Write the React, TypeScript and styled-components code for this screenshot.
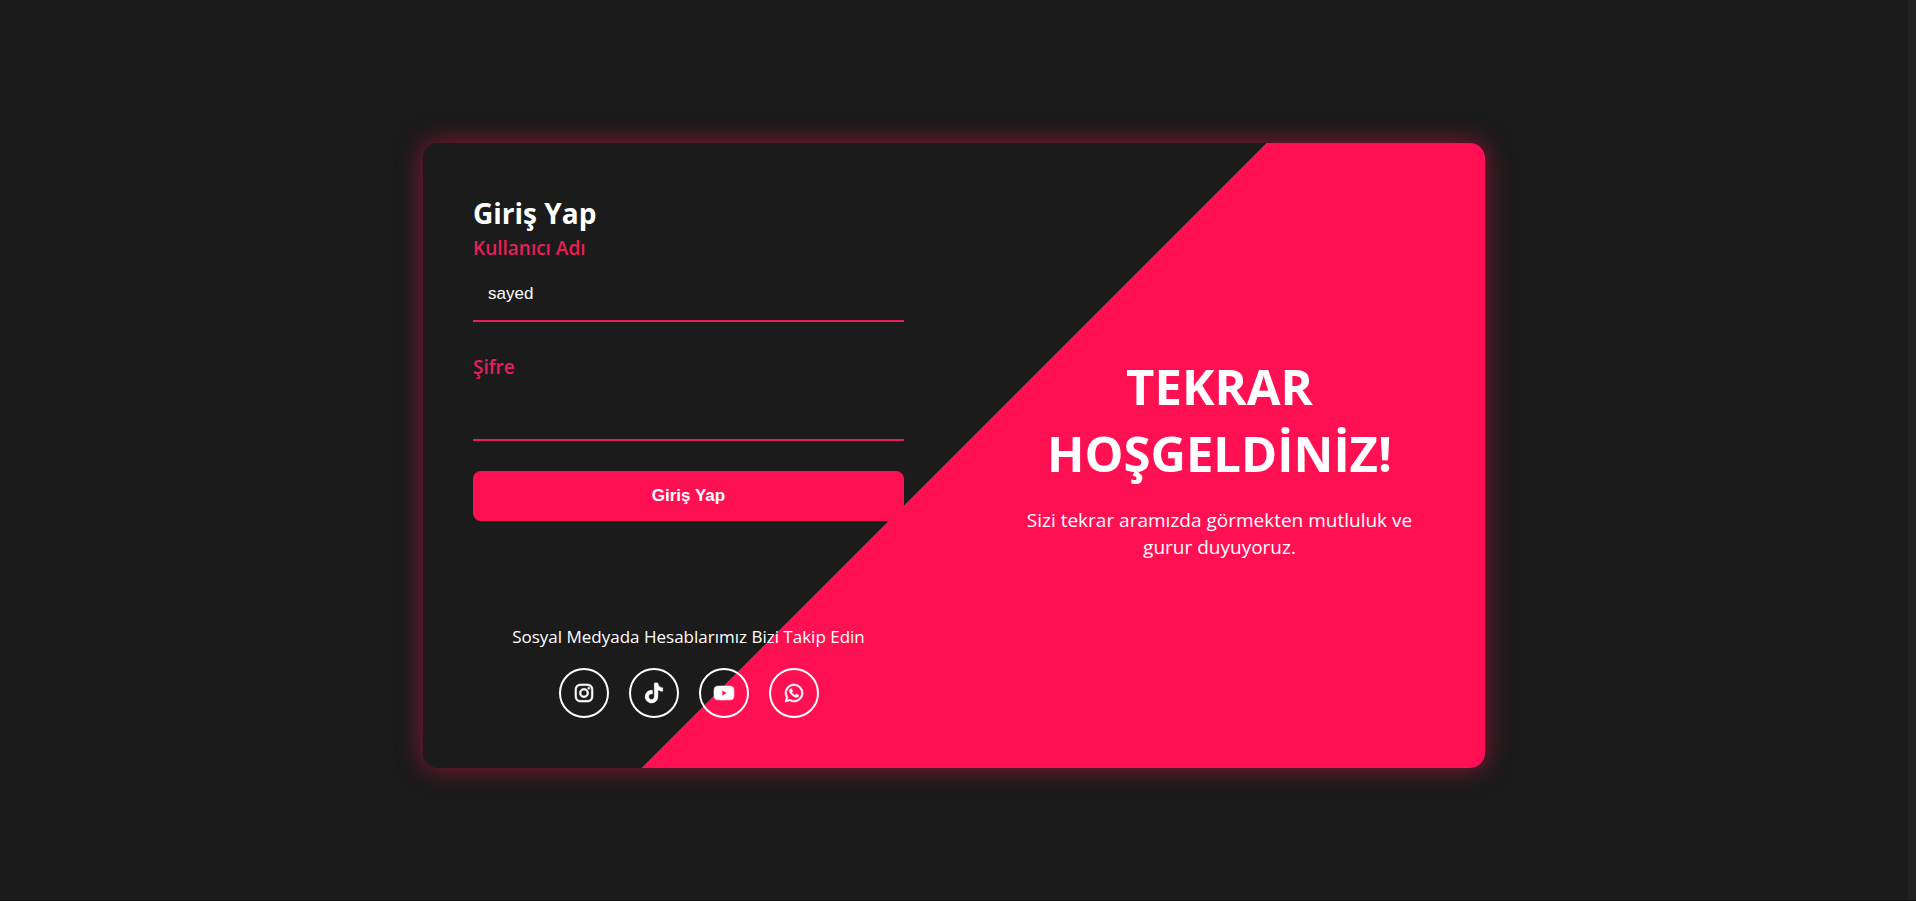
import React from "react";
import styled, { createGlobalStyle } from "styled-components";
import {
  BiLogoInstagram,
  BiLogoTiktok,
  BiLogoYoutube,
  BiLogoWhatsapp,
} from "react-icons/bi";

const dark = "#1b1b1b";
const accent = "#ff1053";
const labelPink = "#e91e58";

const GlobalStyle = createGlobalStyle`
  *, *::before, *::after { box-sizing: border-box; margin: 0; padding: 0; }
  body {
    background: ${dark};
    color: #fff;
    font-family: "Segoe UI", "Open Sans", "Noto Sans", sans-serif;
  }
`;

const Page = styled.div`
  display: flex;
  min-height: 100vh;
  border-bottom: 1px solid #101010;
`;

const Main = styled.main`
  flex: 1;
  display: flex;
  align-items: center;
  justify-content: center;
  padding: 10px 20px 0;
`;

const Gutter = styled.div`
  width: 8px;
  background: #222;
`;

const Card = styled.section`
  display: grid;
  grid-template-columns: 1fr 1fr;
  width: 100%;
  max-width: 1062px;
  min-height: 625px;
  border-radius: 15px;
  background: linear-gradient(135deg, ${dark} 50%, ${accent} 50%);
  box-shadow: 0 0 25px rgba(255, 16, 83, 0.5);
`;

const LoginSide = styled.div`
  display: flex;
  flex-direction: column;
  justify-content: space-between;
  padding: 50px;
`;

const Form = styled.form`
  display: flex;
  flex-direction: column;
`;

const Title = styled.h2`
  font-size: 28px;
  line-height: 40px;
  font-weight: 700;
`;

const Field = styled.div`
  display: flex;
  flex-direction: column;
  gap: 4px;
  margin-bottom: 30px;
`;

const Label = styled.label`
  font-size: 19px;
  line-height: 31px;
  font-weight: 600;
  color: ${labelPink};
`;

const Input = styled.input`
  width: 100%;
  height: 54px;
  padding: 0 15px;
  border: 0;
  border-bottom: 2px solid ${labelPink};
  outline: none;
  background: transparent;
  color: #fff;
  font: 17px "Liberation Sans", Arial, sans-serif;
`;

const Submit = styled.button`
  height: 50px;
  border: 0;
  border-radius: 8px;
  background: ${accent};
  color: #fff;
  font: 700 17px "Liberation Sans", Arial, sans-serif;
  cursor: pointer;
`;

const Social = styled.div`
  display: flex;
  flex-direction: column;
  align-items: center;
  gap: 19px;
`;

const SocialText = styled.p`
  font-size: 17px;
  line-height: 24px;
`;

const SocialLinks = styled.nav`
  display: flex;
  gap: 20px;
`;

const SocialLink = styled.a`
  display: flex;
  align-items: center;
  justify-content: center;
  width: 50px;
  height: 50px;
  border: 2px solid #fff;
  border-radius: 50%;
  color: #fff;
  font-size: 24px;

  svg {
    stroke-width: 0.6;
  }
`;

const Welcome = styled.div`
  display: flex;
  flex-direction: column;
  justify-content: center;
  gap: 20px;
  padding: 54px 50px 50px;
  text-align: center;
`;

const WelcomeTitle = styled.h1`
  font-size: 49px;
  line-height: 67px;
  font-weight: 700;
`;

const WelcomeText = styled.p`
  font-size: 19px;
  line-height: 27px;
`;

const socials = [
  { name: "Instagram", Icon: BiLogoInstagram },
  { name: "TikTok", Icon: BiLogoTiktok },
  { name: "YouTube", Icon: BiLogoYoutube },
  { name: "WhatsApp", Icon: BiLogoWhatsapp },
];

export default function App() {
  return (
    <>
      <GlobalStyle />
      <Page>
        <Main>
          <Card>
            <LoginSide>
              <Form onSubmit={(e) => e.preventDefault()}>
                <Title>Giriş Yap</Title>
                <Field>
                  <Label htmlFor="username">Kullanıcı Adı</Label>
                  <Input id="username" type="text" defaultValue="sayed" />
                </Field>
                <Field>
                  <Label htmlFor="password">Şifre</Label>
                  <Input id="password" type="password" />
                </Field>
                <Submit type="submit">Giriş Yap</Submit>
              </Form>
              <Social>
                <SocialText>Sosyal Medyada Hesablarımız Bizi Takip Edin</SocialText>
                <SocialLinks>
                  {socials.map(({ name, Icon }) => (
                    <SocialLink key={name} href="#" aria-label={name}>
                      <Icon />
                    </SocialLink>
                  ))}
                </SocialLinks>
              </Social>
            </LoginSide>
            <Welcome>
              <WelcomeTitle>TEKRAR HOŞGELDİNİZ!</WelcomeTitle>
              <WelcomeText>
                Sizi tekrar aramızda görmekten mutluluk ve gurur duyuyoruz.
              </WelcomeText>
            </Welcome>
          </Card>
        </Main>
        <Gutter />
      </Page>
    </>
  );
}
